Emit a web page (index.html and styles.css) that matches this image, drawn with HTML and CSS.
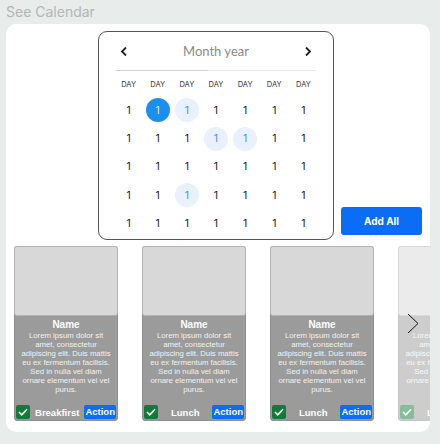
FILE: index.html
```html
<!DOCTYPE html>
<html>
<head>
<meta charset="utf-8">
<link rel="stylesheet" href="styles.css">
</head>
<body>
<h1 class="title">See Calendar</h1>
<div class="panel">
  <div class="top">
    <div class="calendar">
      <div class="cal-head">
        <svg class="chev" width="8" height="11" viewBox="0 0 8 11"><path d="M6 1.5 L2 5.5 L6 9.5" fill="none" stroke="#222" stroke-width="1.8"/></svg>
        <span class="month">Month year</span>
        <svg class="chev" width="8" height="11" viewBox="0 0 8 11"><path d="M2 1.5 L6 5.5 L2 9.5" fill="none" stroke="#222" stroke-width="1.8"/></svg>
      </div>
      <div class="divider"></div>
      <div class="days">
        <span>DAY</span><span>DAY</span><span>DAY</span><span>DAY</span><span>DAY</span><span>DAY</span><span>DAY</span>
      </div>
      <div class="dates">
        <span>1</span><span class="sel">1</span><span class="hl">1</span><span>1</span><span>1</span><span>1</span><span>1</span>
        <span>1</span><span>1</span><span>1</span><span class="hl">1</span><span class="hl">1</span><span>1</span><span>1</span>
        <span>1</span><span>1</span><span>1</span><span>1</span><span>1</span><span>1</span><span>1</span>
        <span>1</span><span>1</span><span class="hl">1</span><span>1</span><span>1</span><span>1</span><span>1</span>
        <span>1</span><span>1</span><span>1</span><span>1</span><span>1</span><span>1</span><span>1</span>
      </div>
    </div>
    <button class="add-all">Add All</button>
  </div>
  <div class="cards">
    <div class="card">
      <div class="img"></div>
      <div class="name">Name</div>
      <p class="desc">Lorem ipsum dolor sit amet, consectetur adipiscing elit. Duis mattis eu ex fermentum facilisis. Sed in nulla vel diam ornare elementum vel vel purus.</p>
      <div class="foot">
        <span class="check"><svg width="10" height="8" viewBox="0 0 10 8"><path d="M1 4 L3.8 6.8 L9 1.2" fill="none" stroke="#fff" stroke-width="1.5"/></svg></span>
        <span class="meal">Breakfirst</span>
        <span class="action">Action</span>
      </div>
    </div>
    <div class="card">
      <div class="img"></div>
      <div class="name">Name</div>
      <p class="desc">Lorem ipsum dolor sit amet, consectetur adipiscing elit. Duis mattis eu ex fermentum facilisis. Sed in nulla vel diam ornare elementum vel vel purus.</p>
      <div class="foot">
        <span class="check"><svg width="10" height="8" viewBox="0 0 10 8"><path d="M1 4 L3.8 6.8 L9 1.2" fill="none" stroke="#fff" stroke-width="1.5"/></svg></span>
        <span class="meal">Lunch</span>
        <span class="action">Action</span>
      </div>
    </div>
    <div class="card">
      <div class="img"></div>
      <div class="name">Name</div>
      <p class="desc">Lorem ipsum dolor sit amet, consectetur adipiscing elit. Duis mattis eu ex fermentum facilisis. Sed in nulla vel diam ornare elementum vel vel purus.</p>
      <div class="foot">
        <span class="check"><svg width="10" height="8" viewBox="0 0 10 8"><path d="M1 4 L3.8 6.8 L9 1.2" fill="none" stroke="#fff" stroke-width="1.5"/></svg></span>
        <span class="meal">Lunch</span>
        <span class="action">Action</span>
      </div>
    </div>
    <div class="card faded">
      <div class="img"></div>
      <div class="name">Name</div>
      <p class="desc">Lorem ipsum dolor sit amet, consectetur adipiscing elit. Duis mattis eu ex fermentum facilisis. Sed in nulla vel diam ornare elementum vel vel purus.</p>
      <div class="foot">
        <span class="check"><svg width="10" height="8" viewBox="0 0 10 8"><path d="M1 4 L3.8 6.8 L9 1.2" fill="none" stroke="#fff" stroke-width="1.5"/></svg></span>
        <span class="meal">Lunch</span>
        <span class="action">Action</span>
      </div>
    </div>
    <svg class="next" width="12" height="21" viewBox="0 0 12 21"><path d="M1 1 L11 10.5 L1 20" fill="none" stroke="#111" stroke-width="1"/></svg>
  </div>
</div>
</body>
</html>
```
FILE: styles.css
```css
* { box-sizing: border-box; }
html, body { margin: 0; }
body {
  background: #e8ecea;
  padding: 3px 10px 0 6px;
  font-family: Inter, "Liberation Sans", sans-serif;
  width: 440px;
  height: 444px;
  overflow: hidden;
}
.title {
  margin: 0 0 3px;
  font-size: 14px;
  line-height: 18px;
  font-weight: 400;
  color: #b3b7b5;
}
.panel {
  background: #fff;
  border-radius: 10px;
  width: 424px;
  height: 408px;
  padding: 7px 8px 11px 8px;
  overflow: hidden;
}
.top {
  display: grid;
  grid-template-columns: 84px 236px 1fr;
  height: 209px;
}
.calendar {
  grid-column: 2;
  border: 1px solid #555;
  border-radius: 9px;
  height: 209px;
  padding: 0 15px;
}
.cal-head {
  height: 38px;
  display: flex;
  align-items: center;
  justify-content: space-between;
  padding: 0 6px 0 6px;
}
.month {
  font-family: Lato, Inter, sans-serif;
  font-size: 13px;
  color: #8a8a8a;
}
.divider {
  height: 1px;
  margin: 0 2px;
  background: linear-gradient(to right, #d2d2d2 46%, #e8e8e8 46%);
}
.days {
  display: grid;
  grid-template-columns: repeat(7, 1fr);
  height: 20px;
  margin-top: 3px;
  align-items: center;
  text-align: center;
  font-size: 7.5px;
  color: #333;
}
.dates {
  display: grid;
  grid-template-columns: repeat(7, 1fr);
  grid-auto-rows: 28.4px;
  margin-top: 2px;
  place-items: center;
  font-size: 10.5px;
  color: #222;
}
.dates span {
  width: 24px;
  height: 24px;
  border-radius: 50%;
  display: flex;
  align-items: center;
  justify-content: center;
}
.dates .sel { background: #1a8ff0; color: #dcecff; }
.dates .hl { background: #e9f1fd; color: #4b8ff0; }
.add-all {
  grid-column: 3;
  justify-self: end;
  align-self: end;
  margin-bottom: 5px;
  width: 81px;
  height: 28px;
  border: 0;
  border-radius: 3px;
  background: #0b6cf6;
  color: #fff;
  font-family: Inter, sans-serif;
  font-weight: 700;
  font-size: 10px;
}
.cards {
  position: relative;
  display: flex;
  gap: 24px;
  margin-top: 6px;
  margin-right: -8px;
  overflow: hidden;
  font-family: "Liberation Sans", Arial, sans-serif;
}
.card {
  flex: 0 0 104px;
  height: 175px;
  background: #9b9b9b;
  border: 1px solid #8e8e8e;
  border-radius: 3px;
  display: flex;
  flex-direction: column;
  color: #fff;
}
.card.faded { opacity: 0.5; }
.img {
  height: 70px;
  background: #d8d8d8;
  border: 1px solid #b3b3b3;
  border-radius: 3px;
  margin: -1px -1px 0;
}
.name {
  text-align: center;
  font-weight: 700;
  font-size: 10px;
  line-height: 12px;
  margin-top: 3px;
}
.desc {
  margin: 0;
  padding: 0 5px;
  text-align: center;
  font-size: 7.75px;
  line-height: 9px;
  color: #f2f2f2;
}
.foot {
  margin-top: auto;
  display: flex;
  align-items: center;
  justify-content: space-between;
  padding: 0 1px 1px 1px;
}
.check {
  width: 14px;
  height: 14px;
  border-radius: 2px;
  background: #137a3b;
  display: flex;
  align-items: center;
  justify-content: center;
}
.meal {
  font-weight: 700;
  font-size: 9.5px;
}
.action {
  background: #0b6cf6;
  border-radius: 2px;
  font-weight: 700;
  font-size: 9.5px;
  line-height: 14px;
  padding: 0 1px;
}
.next {
  position: absolute;
  left: 393px;
  top: 67px;
}
```
